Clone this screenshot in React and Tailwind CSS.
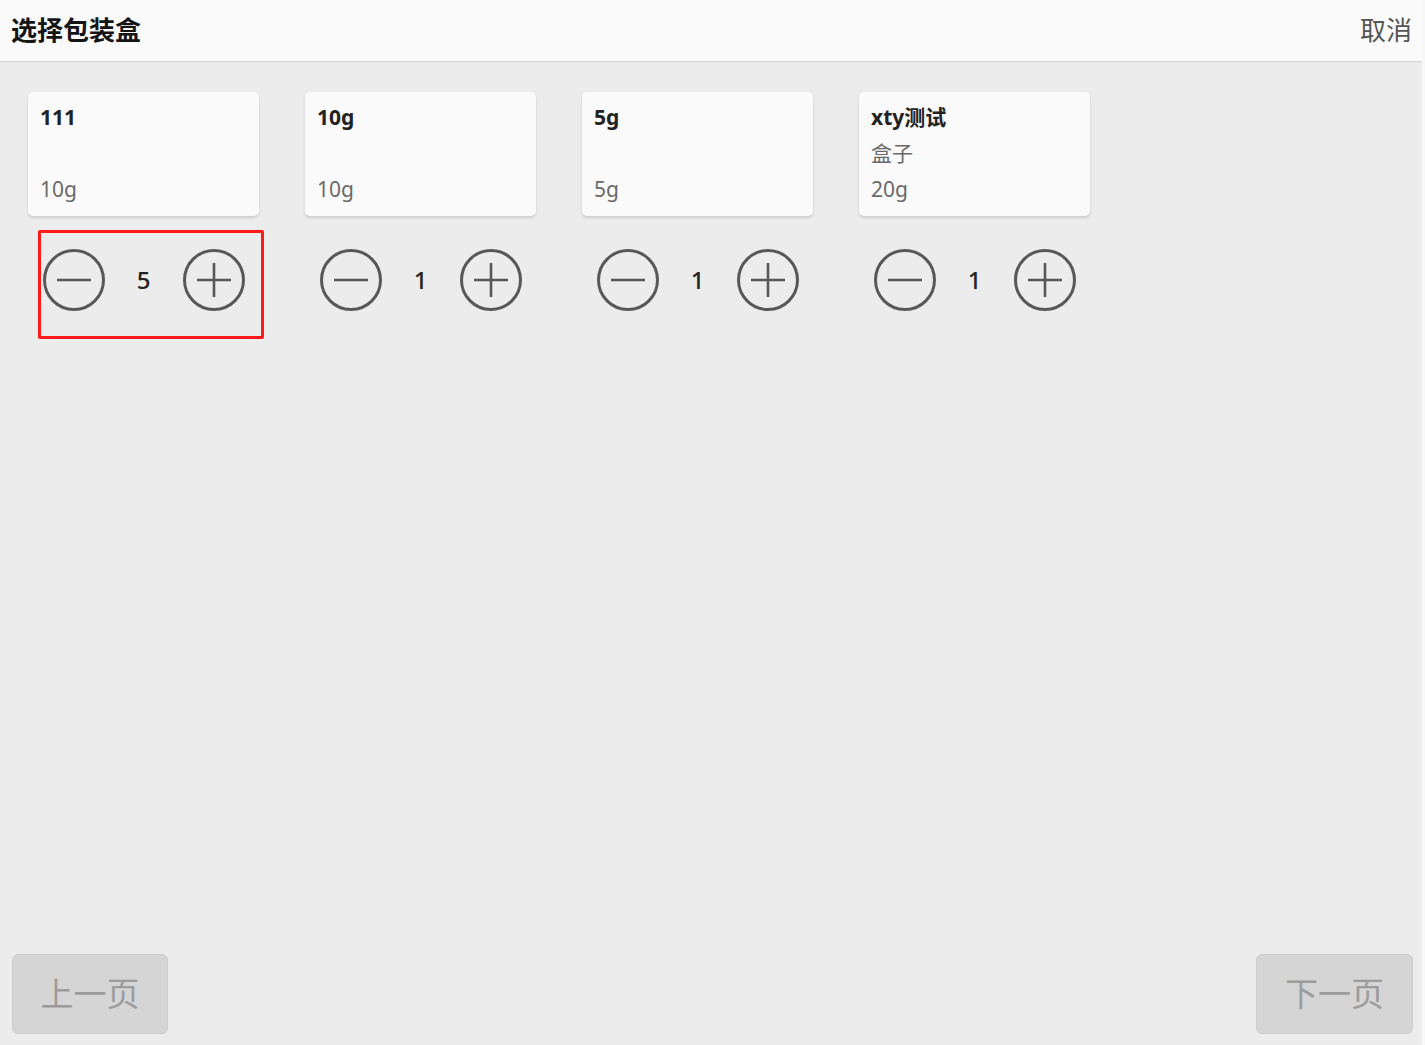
import React from 'react';

const font = { fontFamily: '"Noto Sans", "Noto Sans CJK SC", sans-serif' };

const boxes = [
  { name: '111', desc: '', weight: '10g', qty: 5, selected: true },
  { name: '10g', desc: '', weight: '10g', qty: 1 },
  { name: '5g', desc: '', weight: '5g', qty: 1 },
  { name: 'xty测试', desc: '盒子', weight: '20g', qty: 1 },
];

function RoundButton({ plus }) {
  return (
    <button type="button" className="h-[62px] w-[62px] shrink-0">
      <svg width="62" height="62" viewBox="0 0 62 62" fill="none" stroke="#585858">
        <circle cx="31" cy="31" r="29.5" strokeWidth="3" />
        <line x1="14" y1="31" x2="48" y2="31" strokeWidth="2.6" />
        {plus && <line x1="31" y1="14" x2="31" y2="48" strokeWidth="2.6" />}
      </svg>
    </button>
  );
}

function BoxItem({ box }) {
  return (
    <div className="relative flex w-[231px] flex-col items-center">
      <div className="flex h-[124px] w-full flex-col rounded-[5px] bg-[#fafafa] px-[12px] py-[8px] shadow-[0_2px_3px_rgba(0,0,0,0.13)]">
        <div className="flex h-[36px] items-center text-[21px] font-bold text-[#222]">{box.name}</div>
        <div className="flex h-[36px] items-center text-[21px] text-[#6a6a6a]">{box.desc}</div>
        <div className="flex h-[36px] items-center text-[21px] text-[#6a6a6a]">{box.weight}</div>
      </div>
      <div className="mt-[33px] flex items-center">
        <RoundButton />
        <span className="w-[78px] text-center text-[24px] font-medium text-[#222]">{box.qty}</span>
        <RoundButton plus />
      </div>
      {box.selected && (
        <div className="pointer-events-none absolute left-[10px] top-[138px] h-[109px] w-[226px] rounded-[2px] border-[3px] border-[#ff1a1a]" />
      )}
    </div>
  );
}

export default function App() {
  return (
    <div className="flex h-[1045px] w-full flex-col overflow-hidden border-r-[3px] border-[#f7f7f7] bg-[#ececec]" style={font}>
      <div className="flex h-[62px] shrink-0 items-center justify-between border-b border-[#d4d4d4] bg-[#fafafa] pl-[11px] pr-[10px]">
        <span className="text-[26px] font-bold text-[#151515]">选择包装盒</span>
        <span className="text-[26px] text-[#555]">取消</span>
      </div>
      <div className="flex flex-1 items-start gap-[46px] pl-[28px] pt-[30px]">
        {boxes.map((b) => (
          <BoxItem key={b.name} box={b} />
        ))}
      </div>
      <div className="flex shrink-0 justify-between pb-[11px] pl-[12px] pr-[9px]">
        <button type="button" disabled className="h-[80px] w-[156px] rounded-[6px] border border-[#cdcdcd] bg-[#d5d5d5] text-[33px] text-[#9c9c9c]">
          上一页
        </button>
        <button type="button" disabled className="h-[80px] w-[157px] rounded-[6px] border border-[#cdcdcd] bg-[#d5d5d5] text-[33px] text-[#9c9c9c]">
          下一页
        </button>
      </div>
    </div>
  );
}
